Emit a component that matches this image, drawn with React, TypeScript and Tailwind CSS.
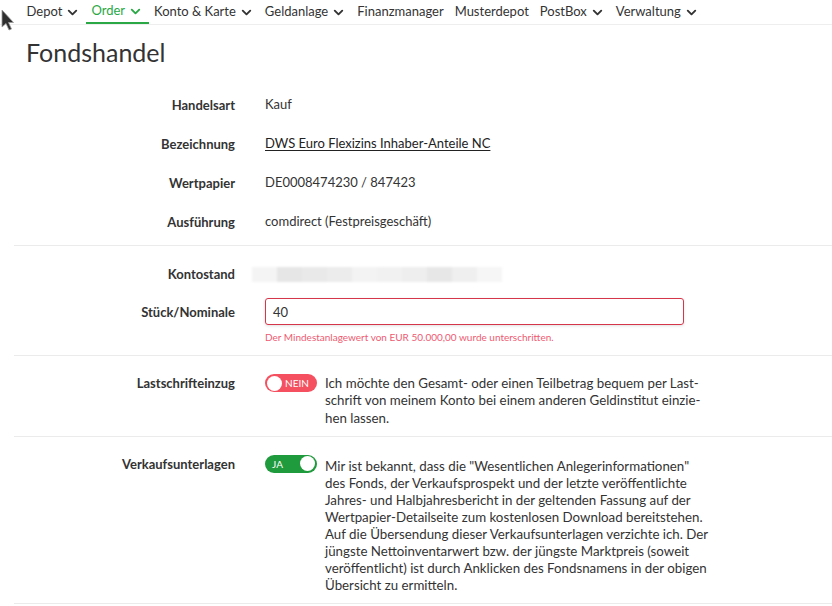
import { ChevronDown } from 'lucide-react'

const navItems = [
  { label: 'Depot', menu: true },
  { label: 'Order', menu: true, active: true },
  { label: 'Konto & Karte', menu: true },
  { label: 'Geldanlage', menu: true },
  { label: 'Finanzmanager', menu: false },
  { label: 'Musterdepot', menu: false },
  { label: 'PostBox', menu: true },
  { label: 'Verwaltung', menu: true },
]

const infoRows = [
  { label: 'Handelsart', value: 'Kauf' },
  { label: 'Bezeichnung', value: 'DWS Euro Flexizins Inhaber-Anteile NC', link: true },
  { label: 'Wertpapier', value: 'DE0008474230 / 847423' },
  { label: 'Ausführung', value: 'comdirect (Festpreisgeschäft)' },
]

const lastschriftLines = [
  'Ich möchte den Gesamt- oder einen Teilbetrag bequem per Last-',
  'schrift von meinem Konto bei einem anderen Geldinstitut einzie-',
  'hen lassen.',
]

const verkaufLines = [
  'Mir ist bekannt, dass die "Wesentlichen Anlegerinformationen"',
  'des Fonds, der Verkaufsprospekt und der letzte veröffentlichte',
  'Jahres- und Halbjahresbericht in der geltenden Fassung auf der',
  'Wertpapier-Detailseite zum kostenlosen Download bereitstehen.',
  'Auf die Übersendung dieser Verkaufsunterlagen verzichte ich. Der',
  'jüngste Nettoinventarwert bzw. der jüngste Marktpreis (soweit',
  'veröffentlicht) ist durch Anklicken des Fondsnamens in der obigen',
  'Übersicht zu ermitteln.',
]

// blurred-out account balance
const blurBlocks = ['#f4f4f4', '#e6e6e6', '#e9e9e9', '#ececec', '#f3f3f3', '#f1f1f1', '#eeeeee', '#e7e7e7', '#efefef', '#f6f6f6']

function Label({ children }: { children: React.ReactNode }) {
  return <div className="w-[221px] shrink-0 text-right text-[13px] font-bold leading-[18px] text-[#333]">{children}</div>
}

function Toggle({ on }: { on: boolean }) {
  return (
    <div
      className={[
        'flex h-[18px] w-[52px] shrink-0 items-center rounded-full px-[2px]',
        on ? 'justify-between bg-[#1f9a3c]' : 'bg-[#f4505f]',
      ].join(' ')}
    >
      {on ? (
        <>
          <span className="pl-[5px] text-[10px] leading-none text-white">JA</span>
          <span className="h-[15px] w-[15px] rounded-full bg-white" />
        </>
      ) : (
        <>
          <span className="h-[15px] w-[15px] rounded-full bg-white" />
          <span className="pl-[3px] text-[10px] leading-none text-white">NEIN</span>
        </>
      )}
    </div>
  )
}

export default function App() {
  return (
    <div className="relative min-h-[606px] w-[832px] overflow-hidden bg-white font-['Lato',sans-serif] text-[#333]">
      {/* mouse cursor */}
      <svg className="absolute left-0 top-[8px]" width="16" height="24" viewBox="0 0 16 24">
        <path d="M2 2 L2 19 L6 15.5 L9 22 L11.5 21 L8.5 14.5 L13.5 14.5 Z" fill="#2f2f2f" stroke="#9a9a9a" strokeWidth="0.8" />
      </svg>

      {/* top navigation */}
      <nav className="flex h-[25px] items-stretch border-b border-[#eeeeee] pl-[21px]">
        {navItems.map((item) => (
          <div
            key={item.label}
            className={[
              'flex items-center gap-[3px] px-[5.5px] text-[13px]',
              item.active ? 'border-b-2 border-[#2aa845] text-[#2aa845]' : 'text-[#333]',
            ].join(' ')}
          >
            <span>{item.label}</span>
            {item.menu && <ChevronDown size={15} strokeWidth={3} />}
          </div>
        ))}
      </nav>

      <h1 className="pl-[26px] pt-[11px] text-[25px] leading-[32px] text-[#333]">Fondshandel</h1>

      <div className="ml-[14px]">
        {/* order info */}
        <section className="pt-[17px] pb-[4px]">
          {infoRows.map((row) => (
            <div key={row.label} className="flex h-[39px] items-center gap-[30px]">
              <Label>{row.label}</Label>
              <div className={['text-[13px]', row.link ? 'text-[#222] underline underline-offset-2' : ''].join(' ')}>
                {row.value}
              </div>
            </div>
          ))}
        </section>

        {/* amount */}
        <section className="border-t border-[#ebebeb] pt-[18px] pb-[11px]">
          <div className="flex h-[20px] items-center gap-[30px]">
            <Label>Kontostand</Label>
            <div className="-ml-[13px] flex h-[15px] blur-[1px]">
              {blurBlocks.map((c, i) => (
                <div key={i} className="h-full w-[25px]" style={{ background: c }} />
              ))}
            </div>
          </div>
          <div className="mt-[14px] flex items-center gap-[30px]">
            <Label>Stück/Nominale</Label>
            <input
              readOnly
              value="40"
              className="h-[27px] w-[419px] rounded-[3px] border border-[#d6364a] px-[7px] text-[13px] text-[#333] shadow-[0_1px_3px_rgba(0,0,0,0.12)] outline-none"
            />
          </div>
          <div className="ml-[251px] mt-[6px] text-[10px] leading-[13px] text-[#ee5a72]">
            Der Mindestanlagewert von EUR 50.000,00 wurde unterschritten.
          </div>
        </section>

        {/* direct debit */}
        <section className="border-t border-[#ebebeb] pt-[18px] pb-[9px]">
          <div className="flex items-start gap-[30px]">
            <Label>Lastschrifteinzug</Label>
            <div className="flex items-start gap-[8px]">
              <Toggle on={false} />
              <div className="pt-[1px] text-[13.3px] leading-[17.3px]">
                {lastschriftLines.map((l) => (
                  <div key={l} className="whitespace-nowrap">{l}</div>
                ))}
              </div>
            </div>
          </div>
        </section>

        {/* sales documents */}
        <section className="border-t border-[#ebebeb] pt-[18px] pb-[9px]">
          <div className="flex items-start gap-[30px]">
            <Label>Verkaufsunterlagen</Label>
            <div className="flex items-start gap-[8px]">
              <Toggle on />
              <div className="pt-[3px] text-[13.3px] leading-[17px]">
                {verkaufLines.map((l) => (
                  <div key={l} className="whitespace-nowrap">{l}</div>
                ))}
              </div>
            </div>
          </div>
        </section>
        <div className="border-t border-[#ebebeb]" />
      </div>
    </div>
  )
}
